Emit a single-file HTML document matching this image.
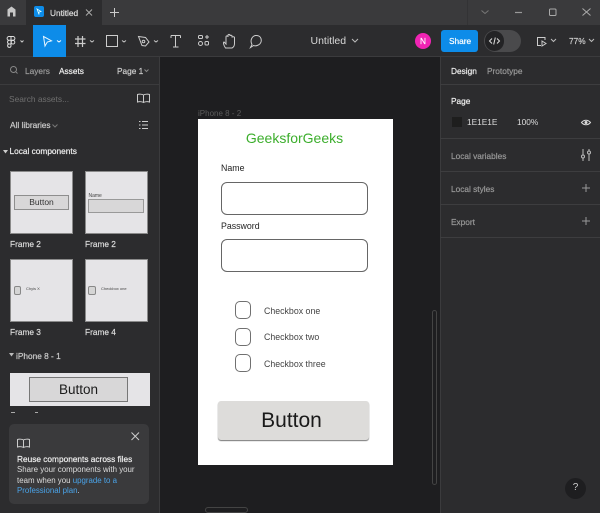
<!DOCTYPE html>
<html><head><meta charset="utf-8"><style>
html,body{margin:0;padding:0;background:#1e1e20}
#r{position:relative;width:600px;height:513px;overflow:hidden;background:#1e1e20;font-family:"Liberation Sans",sans-serif;color:#e8e8e8}
#r div,#r span.t{position:absolute}
.t{position:absolute;white-space:nowrap;line-height:12px;font-size:8px}
svg{position:absolute;overflow:visible}
.b{font-weight:400;font-size:8.3px;-webkit-text-stroke:.2px}
.th{background:#e5e4e7;border:1px solid #8a8a8a;box-sizing:border-box}
.in{box-sizing:border-box;border:1px solid #666;border-radius:6px;background:#fff}
.cb{box-sizing:border-box;border:1px solid #707070;border-radius:5px;background:#fff;left:235px;width:16px;height:18px}
.lbl{color:#444;font-size:8.800px}
.hr{background:#3d3d3f;height:1px;left:440px;width:160px}
</style></head><body><div id="r">
<!-- tab bar -->
<div style="left:0;top:0;width:600px;height:25px;background:#3a3a3c"></div>
<div style="left:26px;top:0;width:76px;height:25px;background:#2c2c2e"></div>
<div style="left:0;top:25px;width:600px;height:32px;background:#2c2c2e"></div>
<div style="left:0;top:56px;width:600px;height:1px;background:#3b3b3d"></div>
<svg style="left:0;top:0" width="600" height="57" fill="none" stroke="#d8d8d8" stroke-width="1">
<path d="M7.500 16.500V9.500L11.500 6.500L15.500 9.500V16.500H13V12.500H10V16.500Z" fill="#c8c8c8" stroke="none"/>
<path d="M86 9.500L92 15.500M92 9.500L86 15.500" stroke="#aaa"/>
<path d="M114.500 8V17M110 12.500H119" stroke="#ccc"/>
<path d="M481.500 10.500L485 13.500L488.500 10.500" stroke="#777"/>
<path d="M515 12.500H522" stroke="#999" stroke-width="1.200"/>
<rect x="549.500" y="9" width="6.500" height="6.500" rx="1" stroke="#aaa"/>
<path d="M582.500 8.500L590.500 15.500M590.500 8.500L582.500 15.500" stroke="#aaa"/>
<path d="M467.500 0V25" stroke="#333335"/>
<!-- figma menu -->
<g stroke="#ddd" stroke-width="1">
<path d="M11 36.500H9a1.900 1.900 0 0 0 0 3.800H13a1.900 1.900 0 0 0 0-3.800H9M9 40.300a1.900 1.900 0 0 0 0 3.700H11V36.500M9 44a1.700 1.700 0 1 0 2 1.700V44"/>
<circle cx="13" cy="42.200" r="1.800"/>
</g>
<path d="M20.500 40.500L22 42L23.500 40.500M90 40.500L92 42L94 40.500M122 40.500L124 42L126 40.500M154 40.500L156 42L158 40.500" stroke="#ccc"/>
</svg>
<div style="left:33px;top:25px;width:33px;height:32px;background:#0d8ce9"></div>
<svg style="left:0;top:25px" width="300" height="32" fill="none" stroke="#e0e0e0" stroke-width="1">
<path d="M43.500 11.500L51.500 15.800L47.300 17L45 21Z" stroke="#e8f6ff"/>
<path d="M57 15.500L59 17L61 15.500" stroke="#fff"/>
<path d="M78 11V22M82.500 11V22M75 14H85.500M75 18.500H85.500" stroke="#ccc" stroke-width="1.200"/>
<rect x="106.500" y="10.500" width="11" height="11" stroke="#ccc"/>
<path d="M138.500 11.500L145.500 12.500L149 17L145.500 21L142 20.500Z" stroke="#ccc"/>
<circle cx="143.500" cy="16.500" r="1.300" stroke="#ccc"/>
<path d="M171 10.500H180.500M175.500 10.500V22M173 22H178.500M171 10.500V13M180.500 10.500V13" stroke="#ccc"/>
<g stroke="#ccc"><rect x="198.500" y="10.500" width="4" height="3" rx="1"/><path d="M205 12H209M207 10V14"/><circle cx="200.500" cy="18.500" r="2"/><rect x="205" y="16.500" width="3.500" height="3.500" rx="1"/></g>
<path d="M225.500 23C223.500 20 223 17.500 224 17L226 19V12C226 10.500 228 10.500 228 12V10.500C228 9 230 9 230 10.500V11C230 10 232 10 232 11V12.500C232 11.500 234.500 11.500 234.500 12.500V18.500C234.500 21 233 22.500 232 23Z" stroke="#ccc"/>
<path d="M250.500 22.500L252 19.500C249.500 15 252.500 11 255.500 10.500C260 10 262 13.500 261 17C260 20 256 21.500 253.500 20.500Z" stroke="#ccc"/>
</svg>
<div style="left:34px;top:6px;width:10px;height:11px;background:#0d8ce9;border-radius:2px"></div>
<svg style="left:34px;top:6px" width="10" height="11" fill="none" stroke="#dff" stroke-width=".8"><path d="M3 3L7 5.500L5 6L5 8.500Z"/></svg>
<span class="t b" style="left:50px;top:6.500px;color:#ddd">Untitled</span>
<span class="t" style="left:310.500px;top:35px;font-size:10.500px;color:#d8d8d8">Untitled</span>
<svg style="left:350px;top:38px" width="10" height="6" fill="none" stroke="#bbb"><path d="M2 1L5 4L8 1"/></svg>
<div style="left:415px;top:33px;width:16px;height:16px;border-radius:8px;background:#f024b4"></div>
<span class="t b" style="left:420px;top:35px;color:#fff">N</span>
<div style="left:441px;top:30px;width:37px;height:22px;border-radius:3px;background:#0d8ce9"></div>
<span class="t b" style="left:449px;top:35px;color:#fff">Share</span>
<div style="left:484px;top:30px;width:37px;height:22px;border-radius:11px;background:#4a4a4c"></div>
<div style="left:485px;top:31px;width:19px;height:20px;border-radius:10px;background:#232325"></div>
<svg style="left:489px;top:35px" width="12" height="12" fill="none" stroke="#ddd"><path d="M3 3.500L.5 6L3 8.500M8 3.500L10.500 6L8 8.500M6.300 2.500L4.700 9.500"/></svg>
<svg style="left:536px;top:36px" width="12" height="11" fill="none" stroke="#ccc"><path d="M5 9.500H1.500V1.500H9V4"/><path d="M6 5L10 7.500L6 10Z"/></svg>
<svg style="left:551px;top:39px" width="56" height="6" fill="none" stroke="#bbb"><path d="M0 0L2.500 2.500L5 0M38 0L40.500 2.500L43 0"/></svg>
<span class="t b" style="left:569px;top:35px;color:#ccc">77%</span>
<!-- left panel -->
<div style="left:0;top:57px;width:160px;height:456px;background:#2c2c2e"></div>
<div style="left:0;top:84px;width:160px;height:1px;background:#3b3b3d"></div>
<svg style="left:10px;top:66px" width="10" height="10" fill="none" stroke="#888"><circle cx="3.500" cy="3.500" r="3"/><path d="M6 6L7.500 7.500"/></svg>
<span class="t b" style="left:25px;top:65px;color:#9a9a9a">Layers</span>
<span class="t b" style="left:59px;top:65px;color:#eee">Assets</span>
<span class="t b" style="left:117px;top:65px;color:#ccc">Page 1</span>
<svg style="left:144px;top:69px" width="6" height="4" fill="none" stroke="#888"><path d="M.5 .5L2.500 2.500L4.500 .5"/></svg>
<span class="t" style="left:9px;top:92.500px;font-size:8.400px;color:#6f6f6f">Search assets...</span>
<svg style="left:137px;top:93px" width="13" height="11" fill="none" stroke="#ccc"><path d="M6.500 2C5 1 2 1 .5 1.500V9C2 8.500 5 8.500 6.500 9.500C8 8.500 11 8.500 12.500 9V1.500C11 1 8 1 6.500 2ZM6.500 2V9.500"/></svg>
<span class="t b" style="left:10px;top:119px;color:#ccc">All libraries</span>
<svg style="left:52px;top:124px" width="6" height="4" fill="none" stroke="#777"><path d="M.5 .5L3 3L5.500 .5"/></svg>
<svg style="left:139px;top:120px" width="9" height="10" fill="none" stroke="#ccc"><path d="M3 1.500H9M3 5H9M3 8.500H9M0 1.500H1.500M0 5H1.500M0 8.500H1.500"/></svg>
<svg style="left:3px;top:150px" width="5" height="4"><path d="M0 0H5L2.500 3.500Z" fill="#ccc"/></svg>
<span class="t b" style="left:9.500px;top:145px;color:#eee">Local components</span>
<div class="th" style="left:10px;top:171px;width:63px;height:63px"></div>
<div style="left:14px;top:195px;width:55px;height:15px;box-sizing:border-box;border:1px solid #8e8e8e;background:#d8d7d8"></div>
<span class="t" style="left:14px;top:196px;width:55px;text-align:center;font-size:8.500px;color:#333">Button</span>
<div class="th" style="left:85px;top:171px;width:63px;height:63px"></div>
<span class="t" style="left:88.500px;top:190px;font-size:5px;color:#444">Name</span>
<div style="left:88px;top:199px;width:56px;height:14px;box-sizing:border-box;border:1px solid #999;background:#d8d7d8"></div>
<span class="t b" style="left:10px;top:238px;color:#ddd">Frame 2</span>
<span class="t b" style="left:85px;top:238px;color:#ddd">Frame 2</span>
<div class="th" style="left:10px;top:259px;width:63px;height:63px"></div>
<div style="left:14px;top:286px;width:7px;height:9px;box-sizing:border-box;border:1px solid #888;border-radius:2px;background:#d5d5d5"></div>
<span class="t" style="left:26px;top:283px;font-size:4px;color:#444">Chyis X</span>
<div class="th" style="left:85px;top:259px;width:63px;height:63px"></div>
<div style="left:88px;top:286px;width:8px;height:9px;box-sizing:border-box;border:1px solid #888;border-radius:2px;background:#d5d5d5"></div>
<span class="t" style="left:101px;top:283px;font-size:4px;color:#444">Checkbox one</span>
<span class="t b" style="left:10px;top:326px;color:#ddd">Frame 3</span>
<span class="t b" style="left:85px;top:326px;color:#ddd">Frame 4</span>
<svg style="left:9px;top:353px" width="5" height="4"><path d="M0 0H5L2.500 3.500Z" fill="#bbb"/></svg>
<span class="t b" style="left:16px;top:350px;color:#ccc">iPhone 8 - 1</span>
<div style="left:10px;top:373px;width:140px;height:33px;background:#e5e4e7"></div>
<div style="left:29px;top:377px;width:99px;height:25px;box-sizing:border-box;border:1px solid #777;background:#d8d7d8"></div>
<span class="t" style="left:29px;top:384px;width:99px;text-align:center;font-size:13.500px;color:#1c1c1c">Button</span>
<div style="left:11px;top:412px;width:4px;height:1px;background:#aaa"></div>
<div style="left:35px;top:412px;width:3px;height:1px;background:#aaa"></div>
<div style="left:0;top:414px;width:160px;height:99px;background:#2c2c2e"></div>
<div style="left:9px;top:424px;width:140px;height:80px;background:#3a3a3c;border-radius:5px"></div>
<svg style="left:17px;top:438px" width="13" height="11" fill="none" stroke="#ccc"><path d="M6.500 2C5 1 2 1 .5 1.500V9C2 8.500 5 8.500 6.500 9.500C8 8.500 11 8.500 12.500 9V1.500C11 1 8 1 6.500 2ZM6.500 2V9.500"/></svg>
<svg style="left:131px;top:432px" width="9" height="9" fill="none" stroke="#ccc"><path d="M.5 .5L8 8M8 .5L.5 8"/></svg>
<span class="t b" style="left:17px;top:453px;color:#eee">Reuse components across files</span>
<span class="t" style="left:17px;top:464px;font-size:7.900px;color:#ddd">Share your components with your</span>
<span class="t" style="left:17px;top:474.500px;font-size:7.900px;color:#ddd">team when you <span style="color:#4aa3e8">upgrade to a</span></span>
<span class="t" style="left:17px;top:485px;font-size:7.900px;color:#4aa3e8">Professional plan<span style="color:#ddd">.</span></span>
<!-- canvas -->
<div style="left:159px;top:57px;width:1px;height:456px;background:#3b3b3d"></div>
<span class="t" style="left:198px;top:108px;color:#5c5c5c">iPhone 8 - 2</span>
<div style="left:198px;top:119px;width:195px;height:346px;background:#fff"></div>
<span class="t" style="left:198px;top:131px;width:193px;text-align:center;font-size:14px;line-height:14px;color:#3cae2c">GeeksforGeeks</span>
<span class="t" style="left:221px;top:162px;font-size:8.800px;color:#222">Name</span>
<div class="in" style="left:221px;top:182px;width:147px;height:33px"></div>
<span class="t" style="left:221px;top:220px;font-size:8.800px;color:#222">Password</span>
<div class="in" style="left:221px;top:239px;width:147px;height:33px"></div>
<div class="cb" style="top:301px"></div>
<div class="cb" style="top:328px"></div>
<div class="cb" style="top:354px"></div>
<span class="t lbl" style="left:264px;top:304.500px">Checkbox one</span>
<span class="t lbl" style="left:264px;top:331px">Checkbox two</span>
<span class="t lbl" style="left:264px;top:357.500px">Checkbox three</span>
<div style="left:218px;top:401px;width:151px;height:39px;background:#dddcda;border-radius:3px;box-shadow:0 1px 1px #777"></div>
<span class="t" style="left:218px;top:410px;width:147px;text-align:center;font-size:21px;line-height:22px;color:#1a1a1a">Button</span>
<div style="left:432px;top:310px;width:5px;height:175px;box-sizing:border-box;border:1px solid #444;border-radius:3px"></div>
<div style="left:205px;top:507px;width:43px;height:6px;box-sizing:border-box;border:1px solid #444;border-radius:3px"></div>
<!-- right panel -->
<div style="left:440px;top:57px;width:160px;height:456px;background:#2c2c2e"></div>
<div style="left:440px;top:57px;width:1px;height:456px;background:#3b3b3d"></div>
<span class="t b" style="left:451px;top:65px;color:#eee">Design</span>
<span class="t b" style="left:487px;top:65px;color:#999">Prototype</span>
<div class="hr" style="top:84px"></div>
<span class="t b" style="left:451px;top:95px;color:#eee">Page</span>
<div style="left:452px;top:117px;width:10px;height:10px;background:#1e1e1e"></div>
<span class="t" style="left:467px;top:116px;font-size:8.300px;color:#ddd">1E1E1E</span>
<span class="t" style="left:517px;top:116px;font-size:8.300px;color:#ddd">100%</span>
<svg style="left:581px;top:119px" width="10" height="7" fill="none" stroke="#ddd"><path d="M.5 3.500C3 .5 7 .5 9.500 3.500C7 6.500 3 6.500 .5 3.500Z"/><circle cx="5" cy="3.500" r="1" fill="#ddd"/></svg>
<div class="hr" style="top:138px"></div>
<span class="t b" style="left:451px;top:149.500px;color:#999">Local variables</span>
<svg style="left:581px;top:149px" width="10" height="12" fill="none" stroke="#bbb"><path d="M2 0V6M2 9V12M8 0V2M8 5V12"/><circle cx="2" cy="7.500" r="1.500"/><circle cx="8" cy="3.500" r="1.500"/></svg>
<div class="hr" style="top:171px"></div>
<span class="t b" style="left:451px;top:182.500px;color:#999">Local styles</span>
<svg style="left:581px;top:183px" width="10" height="10" fill="none" stroke="#999"><path d="M5 1V9M1 5H9"/></svg>
<div class="hr" style="top:204px"></div>
<span class="t b" style="left:451px;top:215.500px;color:#999">Export</span>
<svg style="left:581px;top:216px" width="10" height="10" fill="none" stroke="#999"><path d="M5 1V9M1 5H9"/></svg>
<div class="hr" style="top:237px"></div>
<div style="left:565px;top:478px;width:21px;height:21px;border-radius:11px;background:#1e1e20"></div>
<span class="t" style="left:565px;top:482px;width:21px;text-align:center;font-size:10px;color:#ccc">?</span>
</div></body></html>
